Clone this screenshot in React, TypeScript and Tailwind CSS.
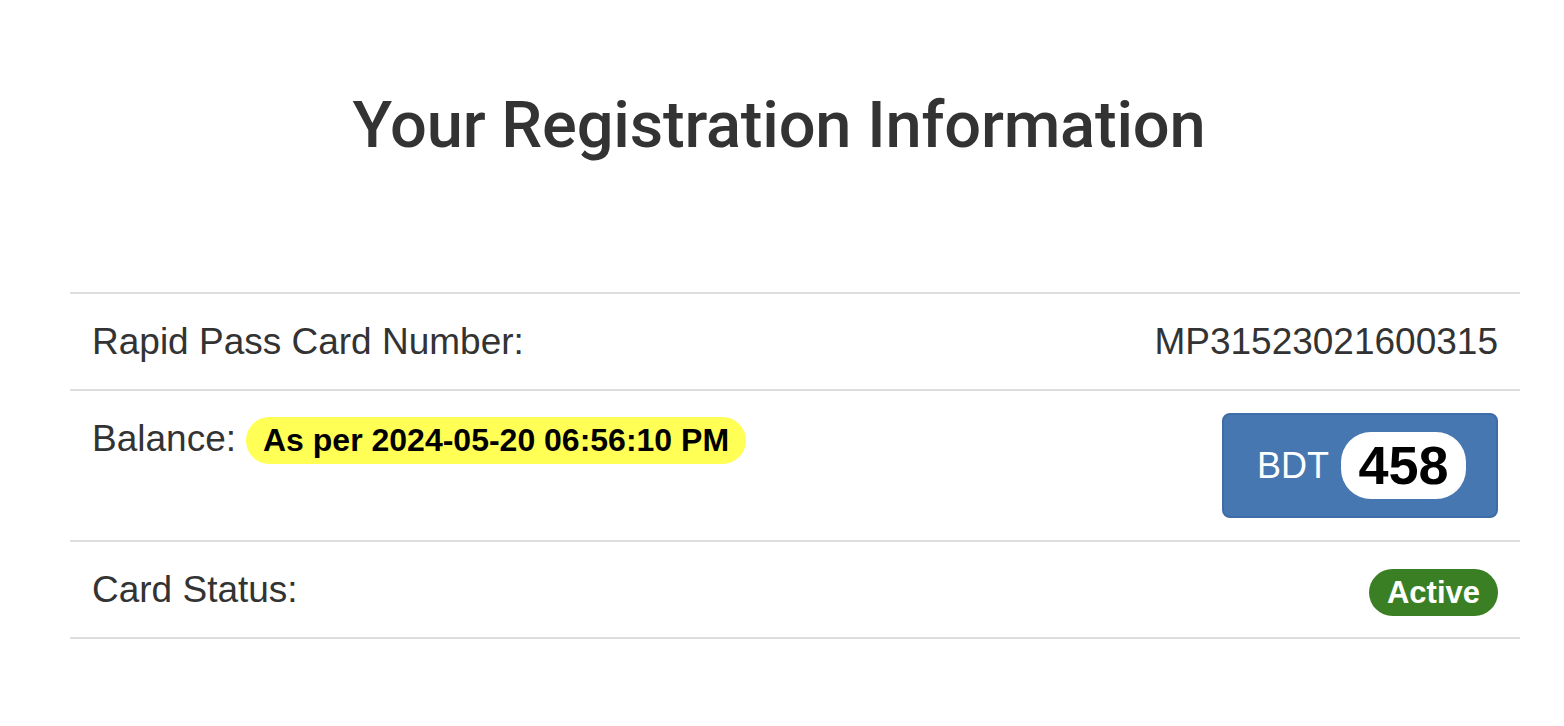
export default function App() {
  return (
    <div className="min-h-screen w-full bg-white text-[#333]" style={{ fontFamily: '"Liberation Sans", Arial, sans-serif' }}>
      {/* heading */}
      <h1
        className="pt-[90px] pr-[6px] text-center text-[65px] font-medium leading-[1.1] tracking-[-0.2px]"
        style={{ fontFamily: 'Roboto, "Liberation Sans", sans-serif' }}
      >
        Your Registration Information
      </h1>

      {/* info table */}
      <div className="ml-[70px] mt-[130px] w-[1450px] border-b-2 border-[#ddd] text-[37px] leading-[51px]">
        <div className="flex items-center justify-between border-t-2 border-[#ddd] px-[22px] py-[22px]">
          <span>Rapid Pass Card Number:</span>
          <span>MP31523021600315</span>
        </div>

        <div className="flex items-start justify-between border-t-2 border-[#ddd] px-[22px] py-[22px]">
          <div className="flex items-center">
            <span>Balance:</span>
            <span className="ml-[10px] mt-[4px] inline-flex h-[47px] items-center rounded-full bg-[#ffff55] px-[17px] text-[32px] font-bold text-black">
              As per 2024-05-20 06:56:10 PM
            </span>
          </div>
          <div className="flex h-[105px] w-[276px] items-center rounded-[8px] border-2 border-[#3d6ca6] bg-[#4677b1] pl-[33px]">
            <span className="text-[36px] text-white">BDT</span>
            <span className="ml-[12px] inline-flex h-[67px] w-[125px] items-center justify-center rounded-[30px] bg-white text-[54px] font-bold leading-none text-black">
              458
            </span>
          </div>
        </div>

        <div className="flex items-center justify-between border-t-2 border-[#ddd] px-[22px] py-[22px]">
          <span>Card Status:</span>
          <span className="inline-flex h-[47px] translate-y-[3px] items-center rounded-full bg-[#3a7f23] px-[18px] text-[31px] font-bold leading-none text-white">
            Active
          </span>
        </div>
      </div>
    </div>
  )
}
